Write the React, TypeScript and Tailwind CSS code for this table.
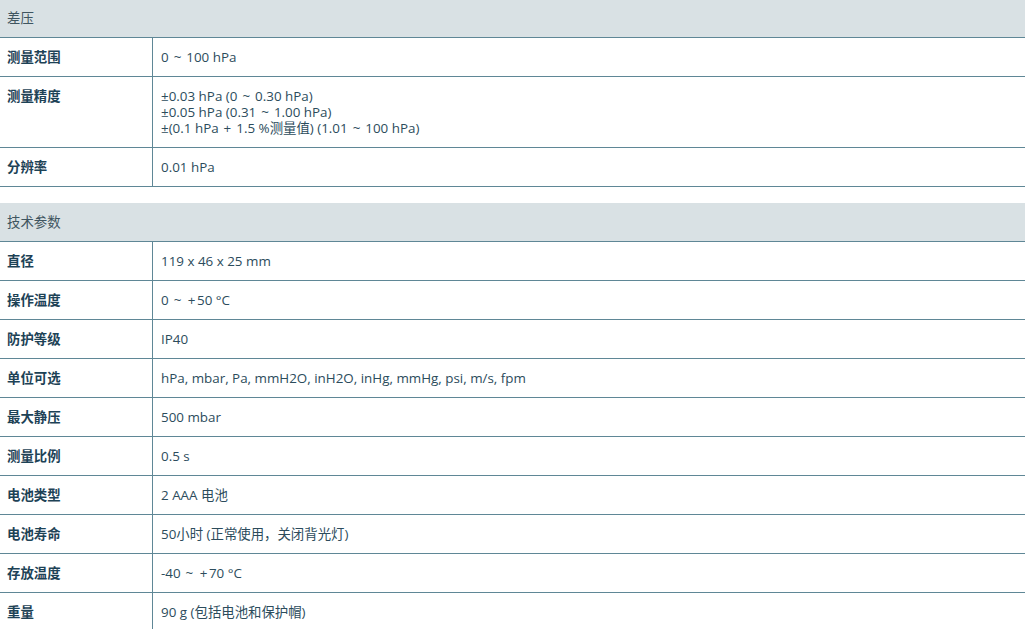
const sections: { title: string; rows: [string, string[]][] }[] = [
  {
    title: '差压',
    rows: [
      ['测量范围', ['0 ~ 100 hPa']],
      [
        '测量精度',
        [
          '±0.03 hPa (0 ~ 0.30 hPa)',
          '±0.05 hPa (0.31 ~ 1.00 hPa)',
          '±(0.1 hPa + 1.5 %测量值) (1.01 ~ 100 hPa)',
        ],
      ],
      ['分辨率', ['0.01 hPa']],
    ],
  },
  {
    title: '技术参数',
    rows: [
      ['直径', ['119 x 46 x 25 mm']],
      ['操作温度', ['0 ~ +50 °C']],
      ['防护等级', ['IP40']],
      ['单位可选', ['hPa, mbar, Pa, mmH2O, inH2O, inHg, mmHg, psi, m/s, fpm']],
      ['最大静压', ['500 mbar']],
      ['测量比例', ['0.5 s']],
      ['电池类型', ['2 AAA 电池']],
      ['电池寿命', ['50小时 (正常使用，关闭背光灯)']],
      ['存放温度', ['-40 ~ +70 °C']],
      ['重量', ['90 g (包括电池和保护帽)']],
    ],
  },
];

// the source font draws ~ and + wider than Open Sans, so pad them a little
const Value = ({ text }: { text: string }) => (
  <div>
    {text.split(/([~+])/).map((part, i) =>
      part === '~' || part === '+' ? (
        <span key={i} className="mx-[1.5px]">
          {part}
        </span>
      ) : (
        part
      )
    )}
  </div>
);

export default function App() {
  return (
    <div
      className="w-[1025px] -mt-px bg-white text-[13.4px] leading-4"
      style={{ fontFamily: '"Open Sans", "Noto Sans CJK SC", sans-serif' }}
    >
      {sections.map((s, i) => (
        <div key={s.title} className={i > 0 ? 'mt-4' : ''}>
          <div className="bg-[#d9e1e4] border-b border-[#5f8796] px-[7px] py-[11px] text-[#3f5560]">
            {s.title}
          </div>
          {s.rows.map(([label, values]) => (
            <div key={label} className="flex border-b border-[#5f8796]">
              <div className="w-[152px] shrink-0 px-[7px] py-[11px] font-bold text-[#1d4256]">{label}</div>
              <div className="flex-1 border-l border-[#5f8796] pl-2 py-[11px] text-[#2c4c5c]">
                {values.map((v) => (
                  <Value key={v} text={v} />
                ))}
              </div>
            </div>
          ))}
        </div>
      ))}
    </div>
  );
}
